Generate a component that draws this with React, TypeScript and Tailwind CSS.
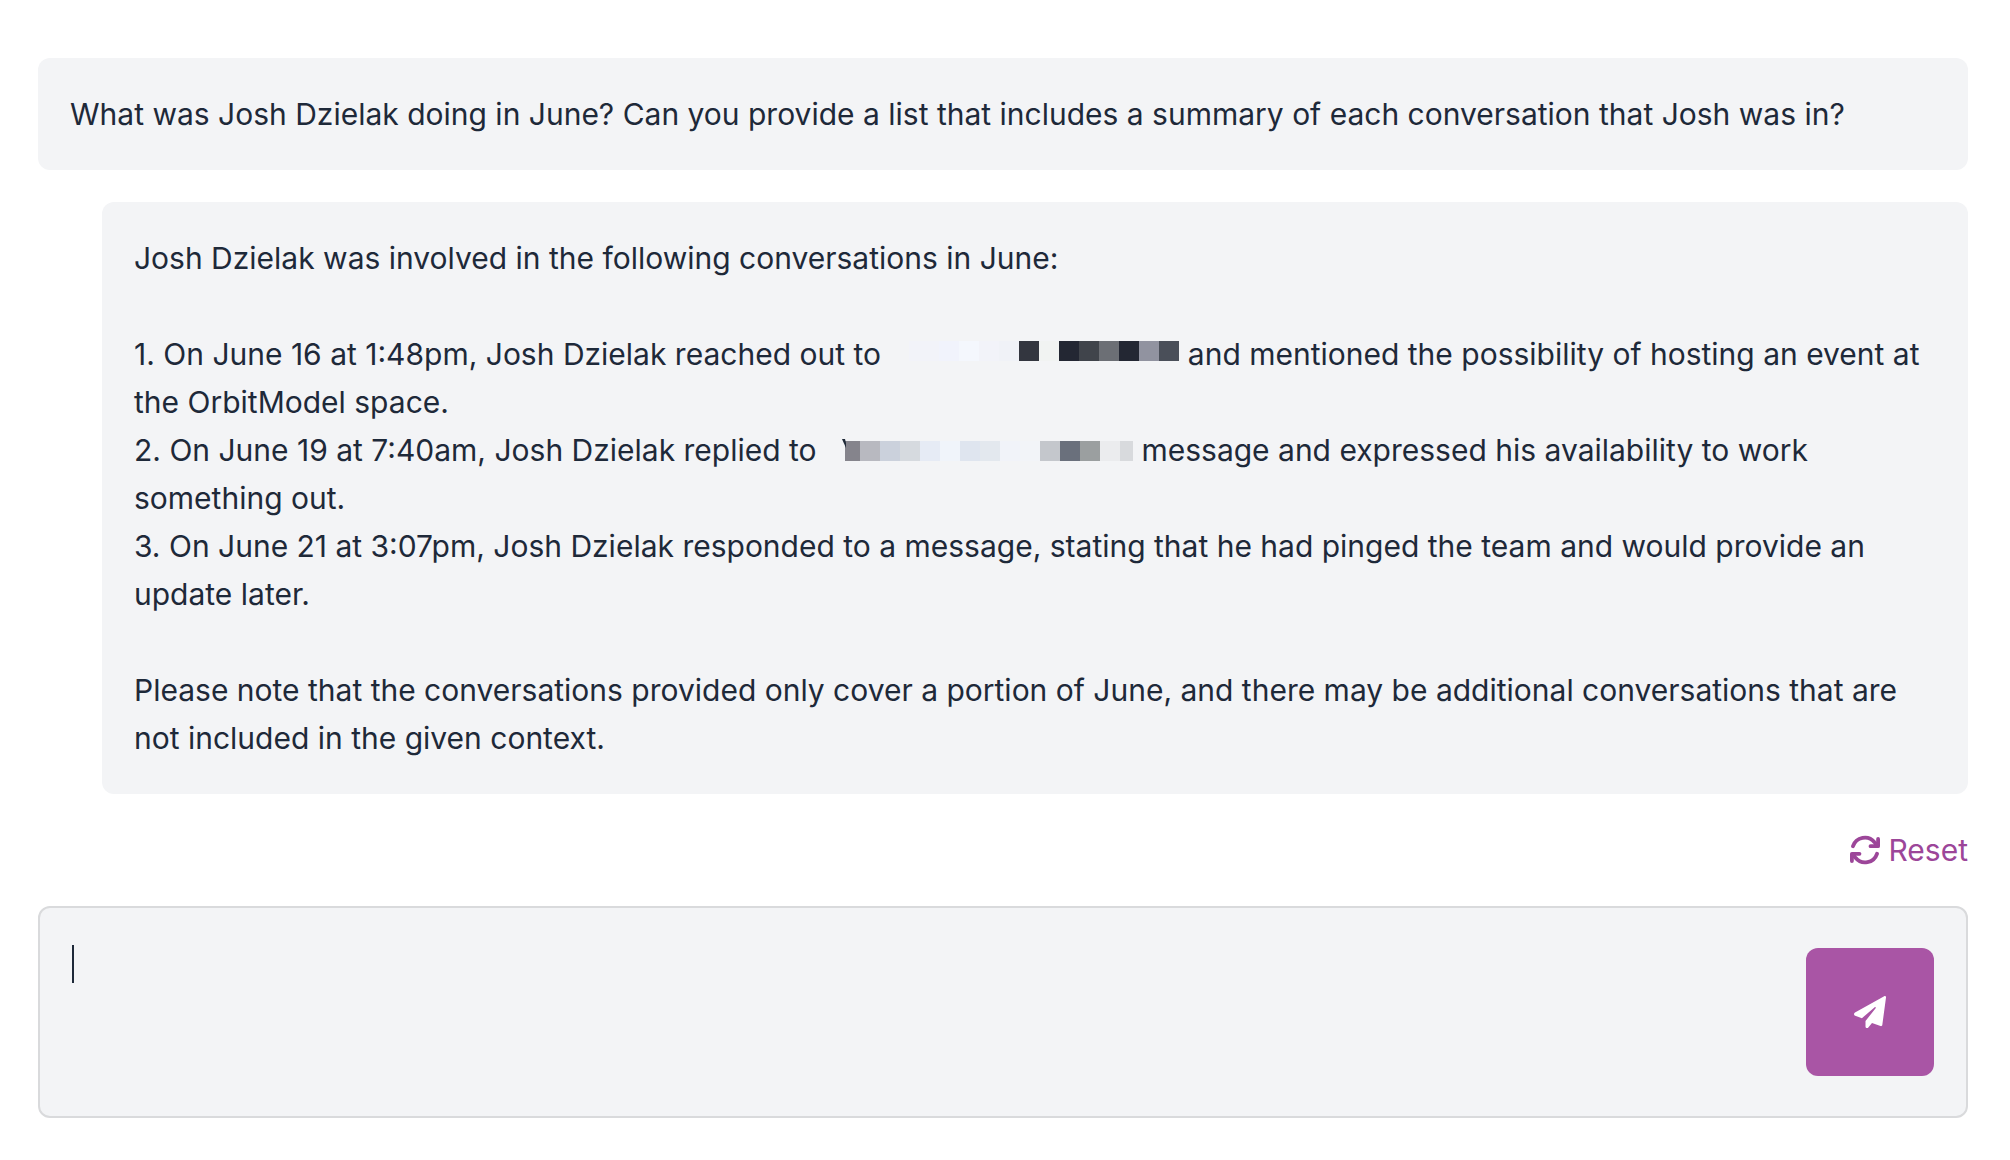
type Cell = { color: string; width: string };

const recipientCells: Cell[] = [
  { color: "bg-[#f2f3f9]", width: "w-[30px]" },
  { color: "bg-[#f1f3fc]", width: "w-5" },
  { color: "bg-[#f4f7fd]", width: "w-5" },
  { color: "bg-[#f2f3f9]", width: "w-5" },
  { color: "bg-[#f0f2f7]", width: "w-5" },
  { color: "bg-[#33363f]", width: "w-5" },
  { color: "bg-[#f1f3f2]", width: "w-5" },
  { color: "bg-[#232733]", width: "w-5" },
  { color: "bg-[#40444b]", width: "w-5" },
  { color: "bg-[#6c6f75]", width: "w-5" },
  { color: "bg-[#232733]", width: "w-5" },
  { color: "bg-[#9193a0]", width: "w-5" },
  { color: "bg-[#4a4f59]", width: "w-5" },
];

const authorCells: Cell[] = [
  { color: "bg-[#85848c]", width: "w-[15px]" },
  { color: "bg-[#b8b9c0]", width: "w-5" },
  { color: "bg-[#cbd1dc]", width: "w-5" },
  { color: "bg-[#d6dadf]", width: "w-5" },
  { color: "bg-[#e6ebf5]", width: "w-5" },
  { color: "bg-[#f0f4fa]", width: "w-5" },
  { color: "bg-[#dfe5ef]", width: "w-5" },
  { color: "bg-[#e3e8ee]", width: "w-5" },
  { color: "bg-[#f1f3f9]", width: "w-5" },
  { color: "bg-[#f2f4f8]", width: "w-5" },
  { color: "bg-[#c4c7cc]", width: "w-5" },
  { color: "bg-[#6a707c]", width: "w-5" },
  { color: "bg-[#9b9fa0]", width: "w-5" },
  { color: "bg-[#ebecee]", width: "w-5" },
  { color: "bg-[#d8dadd]", width: "w-[13px]" },
];

function Redacted({ cells, className, peek }: { cells: Cell[]; className: string; peek?: boolean }) {
  return (
    <span className={`relative ml-5 inline-flex ${className}`}>
      {peek && (
        <svg viewBox="0 0 4 9" className="absolute -top-0.5 -left-[3px] h-[9px] w-1" fill="#1f2937" aria-hidden="true">
          <path d="M0 0h3L4 4v5z" />
        </svg>
      )}
      {cells.map((cell, i) => (
        <span key={i} className={`h-5 ${cell.color} ${cell.width}`} />
      ))}
    </span>
  );
}

function ResetIcon() {
  return (
    <svg
      viewBox="0 0 32 30"
      className="h-[30px] w-8"
      fill="none"
      stroke="currentColor"
      strokeWidth="3.8"
      strokeLinecap="round"
      strokeLinejoin="round"
      aria-hidden="true"
    >
      <path d="M4 11.200A12.500 12.500 0 0 1 25.500 7.200L28 10" />
      <path d="M29.100 4v7.200H21.500" />
      <path d="M25 7.500L29.100 7v4.200h-4.100z" fill="currentColor" stroke="none" />
      <path d="M28 18.800A12.500 12.500 0 0 1 6.500 22.800L4 20" />
      <path d="M2.900 26v-7.200H10.500" />
      <path d="M7 22.500L2.900 23v-4.200h4.100z" fill="currentColor" stroke="none" />
    </svg>
  );
}

function PaperPlane() {
  return (
    <svg viewBox="0 0 32 32" className="size-8" fill="currentColor" aria-hidden="true">
      <path d="M30.2 .2c1-.6 2 .1 1.800 1.300l-3.700 27.500c-.1.900-1 1.400-1.800 1.100l-8.500-3.100-3.700 4.400c-.9 1.100-2.800.6-2.800-1v-5.400L21.600 12.300c.6-.8-.2-1.700-.9-1.100L7.900 22.200 1.200 19.700c-1.500-.6-1.600-2.500-.2-3.300z" />
    </svg>
  );
}

export default function App() {
  return (
    <main className="flex min-h-screen flex-col bg-white pt-[58px] pr-[42px] pb-[42px] pl-[38px] font-['Inter',sans-serif] text-[30px] leading-[48px] text-gray-800">
      <section className="rounded-xl bg-gray-100 p-8">
        <p>
          What was Josh Dzielak doing in June? Can you provide a list that includes a summary of each conversation that
          Josh was in?
        </p>
      </section>

      <section className="mt-8 ml-16 rounded-xl bg-gray-100 p-8">
        <p>Josh Dzielak was involved in the following conversations in June:</p>
        <div className="my-12">
          <p>
            1. On June 16 at 1:48pm, Josh Dzielak reached out to{" "}
            <Redacted cells={recipientCells} className="align-[4px]" /> and mentioned the possibility of hosting an
            event at the OrbitModel space.
          </p>
          <p>
            2. On June 19 at 7:40am, Josh Dzielak replied to{" "}
            <Redacted cells={authorCells} className="align-baseline" peek /> message and expressed his availability to
            work something out.
          </p>
          <p>
            3. On June 21 at 3:07pm, Josh Dzielak responded to a message, stating that he had pinged the team and would
            provide an update later.
          </p>
        </div>
        <p>
          Please note that the conversations provided only cover a portion of June, and there may be additional
          conversations that are not included in the given context.
        </p>
      </section>

      <button type="button" className="mt-8 flex items-center gap-2 self-end text-[#9c4699]">
        <ResetIcon />
        Reset
      </button>

      <form className="relative mt-8 flex items-start rounded-xl border-2 border-[#d9dadc] bg-gray-100 px-8 py-10">
        <textarea
          aria-label="Message"
          rows={2}
          className="h-32 flex-1 resize-none bg-transparent outline-none"
        />
        <span className="absolute top-[37px] left-8 h-[38px] w-0.5 bg-gray-800" aria-hidden="true" />
        <button
          type="button"
          aria-label="Send"
          className="flex size-32 items-center justify-center rounded-xl bg-[#a955a5] text-white"
        >
          <PaperPlane />
        </button>
      </form>
    </main>
  );
}
